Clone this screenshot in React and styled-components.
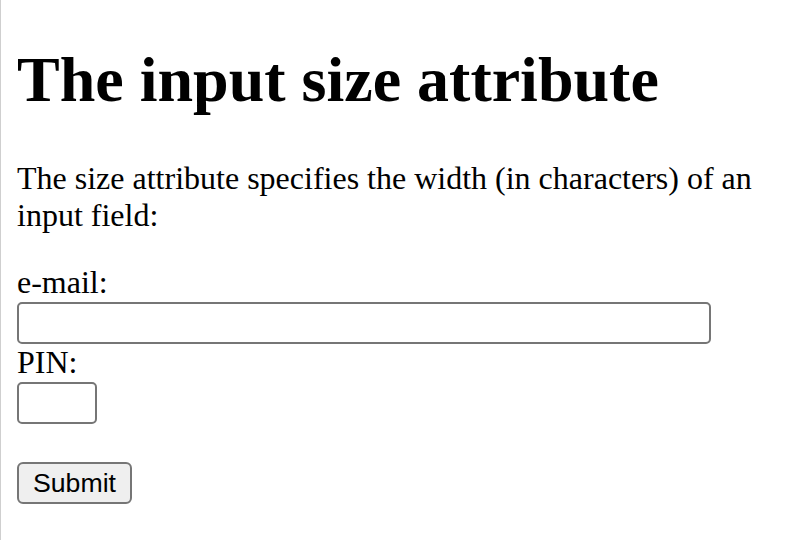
import React from 'react'
import styled, { createGlobalStyle } from 'styled-components'

const GlobalStyle = createGlobalStyle`
    html, body {
        margin: 0;
        padding: 0;
        background: #ffffff;
    }
`;

const Page = styled.div`
    box-sizing: border-box;
    min-height: 540px;
    border-left: 1px solid #cfcfcf;
    padding: 43px 16px 0 16px;
    font-family: "Liberation Serif", "Times New Roman", serif;
    font-size: 32px;
    color: #000;
`;

const Title = styled.h1`
    margin: 0 0 43px 0;
    font-size: 64px;
    font-weight: bold;
    line-height: 74px;
`;

const Intro = styled.p`
    margin: 0 0 30px 0;
    line-height: 37px;
`;

const Form = styled.form`
    display: flex;
    flex-direction: column;
    align-items: flex-start;
`;

const Label = styled.label`
    line-height: 37px;
    height: 37px;
`;

const TextInput = styled.input`
    box-sizing: border-box;
    width: ${props => props.$width}px;
    height: 42px;
    margin: 1px 0 0 0;
    padding: 2px 4px;
    border: 2px solid #767676;
    border-radius: 5px;
    background: #fff;
    font-family: "Liberation Sans", Arial, sans-serif;
    font-size: 26.67px;
`;

const SubmitButton = styled.button`
    box-sizing: border-box;
    margin-top: 38px;
    width: 115px;
    height: 42px;
    padding: 0;
    border: 2px solid #767676;
    border-radius: 6px;
    background: #efefef;
    color: #000;
    font-family: "Liberation Sans", Arial, sans-serif;
    font-size: 26.67px;
`;

const App = () => {
  return (
    <>
      <GlobalStyle />
      <Page>
        <Title>The input size attribute</Title>
        <Intro>The size attribute specifies the width (in characters) of an input field:</Intro>
        <Form onSubmit={e => e.preventDefault()}>
          <Label htmlFor='email'>e-mail:</Label>
          <TextInput id='email' type='text' $width={694} />
          <Label htmlFor='pin'>PIN:</Label>
          <TextInput id='pin' type='text' $width={80} />
          <SubmitButton type='submit'>Submit</SubmitButton>
        </Form>
      </Page>
    </>
  )
}

export default App
